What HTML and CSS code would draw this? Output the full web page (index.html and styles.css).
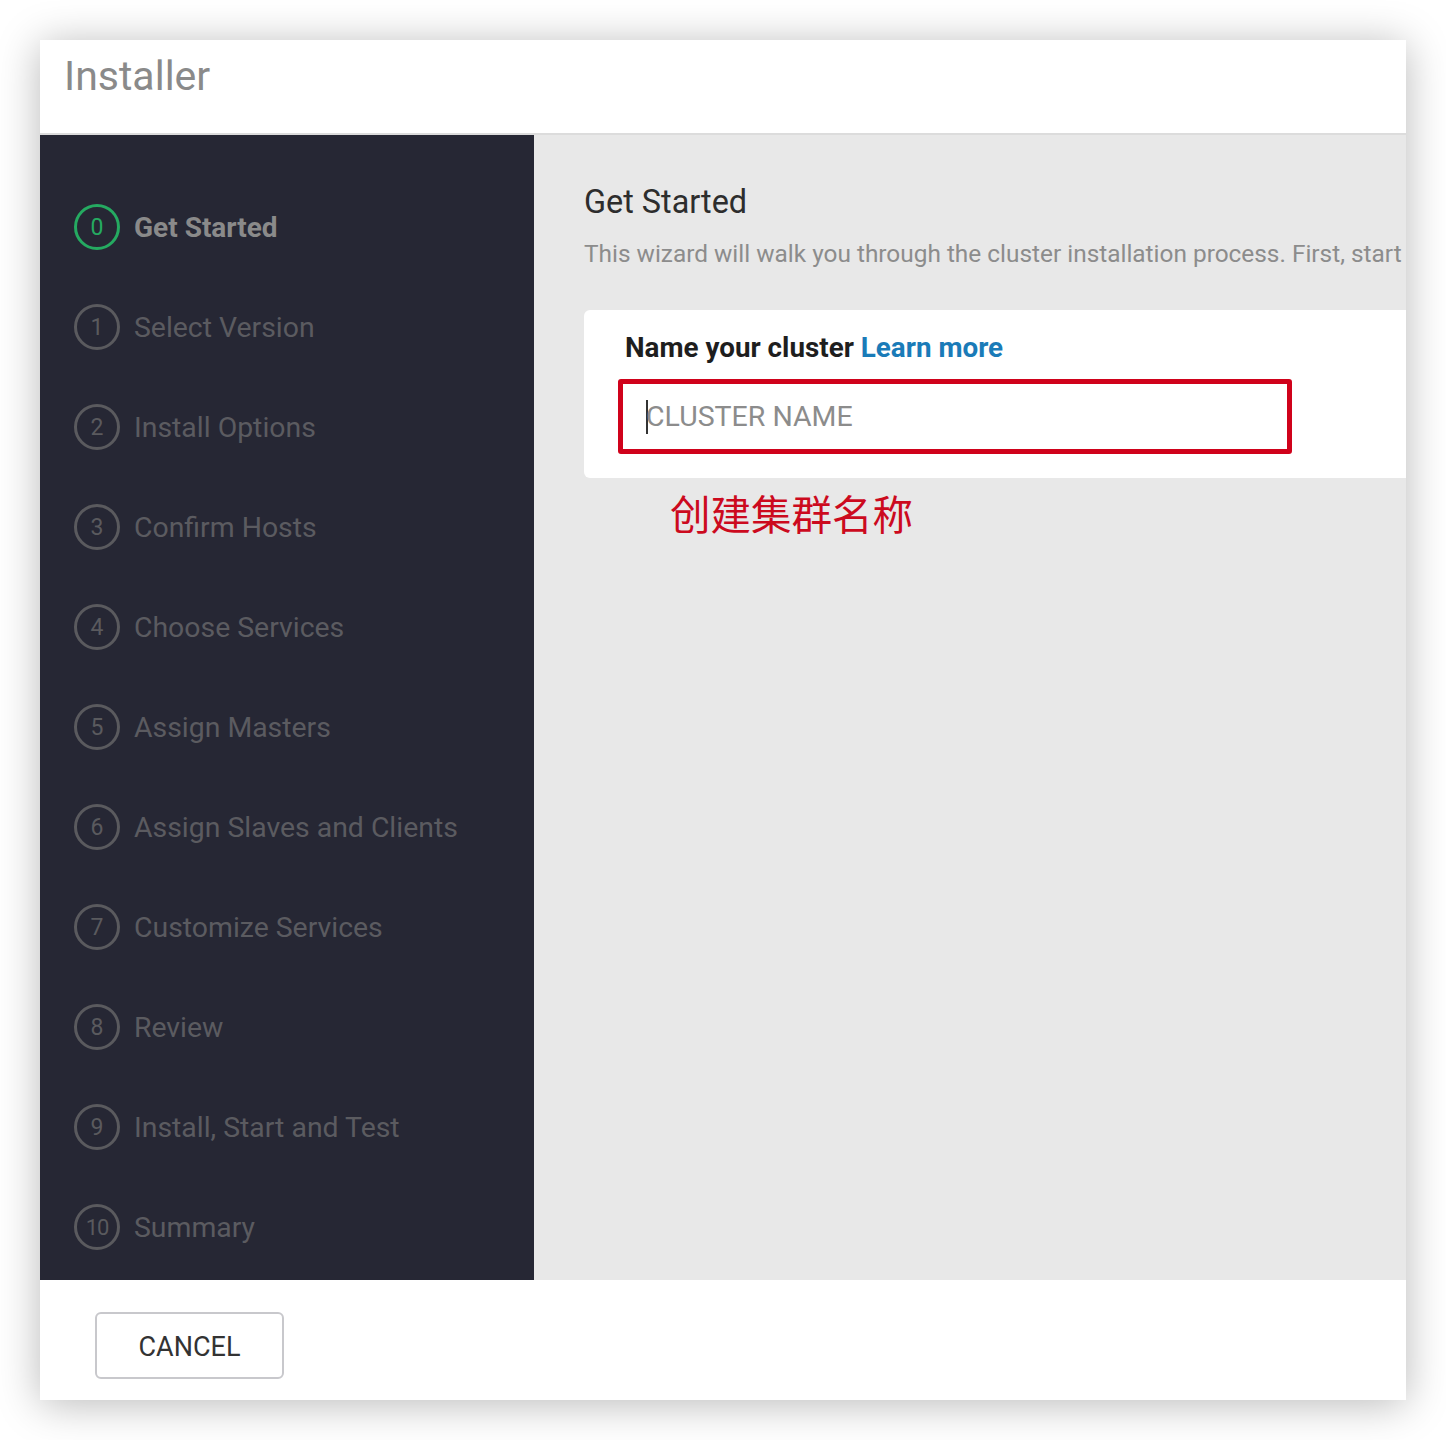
FILE: index.html
```html
<!DOCTYPE html>
<html>
<head>
<meta charset="utf-8">
<link rel="stylesheet" href="styles.css">
</head>
<body>
<div class="window">
  <header class="header">Installer</header>
  <div class="main">
    <nav class="sidebar">
      <div class="step active"><span class="num">0</span><span class="label">Get Started</span></div>
      <div class="step"><span class="num">1</span><span class="label">Select Version</span></div>
      <div class="step"><span class="num">2</span><span class="label">Install Options</span></div>
      <div class="step"><span class="num">3</span><span class="label">Confirm Hosts</span></div>
      <div class="step"><span class="num">4</span><span class="label">Choose Services</span></div>
      <div class="step"><span class="num">5</span><span class="label">Assign Masters</span></div>
      <div class="step"><span class="num">6</span><span class="label">Assign Slaves and Clients</span></div>
      <div class="step"><span class="num">7</span><span class="label">Customize Services</span></div>
      <div class="step"><span class="num">8</span><span class="label">Review</span></div>
      <div class="step"><span class="num">9</span><span class="label">Install, Start and Test</span></div>
      <div class="step"><span class="num num-wide">10</span><span class="label">Summary</span></div>
    </nav>
    <section class="content">
      <h2 class="title">Get Started</h2>
      <p class="desc">This wizard will walk you through the cluster installation process. First, start</p>
      <div class="card">
        <div class="card-label">Name your cluster <a class="link">Learn more</a></div>
        <div class="input"><span class="caret"></span><span class="placeholder">CLUSTER NAME</span></div>
      </div>
      <div class="note">创建集群名称</div>
    </section>
  </div>
  <footer class="footer">
    <button class="cancel">CANCEL</button>
  </footer>
</div>
</body>
</html>
```

FILE: styles.css
```css
html, body {
  margin: 0;
  padding: 0;
  background: #ffffff;
}
body {
  font-family: Roboto, "Liberation Sans", "Noto Sans CJK SC", sans-serif;
  padding: 40px;
  width: 1366px;
}
.window {
  width: 1366px;
  height: 1360px;
  background: #ffffff;
  box-shadow: 0 4px 40px rgba(0, 0, 0, 0.28);
  display: flex;
  flex-direction: column;
  overflow: hidden;
}
.header {
  height: 93px;
  border-bottom: 2px solid #dcdcdc;
  box-sizing: content-box;
  padding-left: 24px;
  font-size: 41px;
  line-height: 72px;
  color: #8a8a8a;
  flex: none;
}
.main {
  display: flex;
  height: 1145px;
  flex: none;
}
.sidebar {
  width: 494px;
  flex: none;
  background: #262734;
  padding-top: 42px;
  box-sizing: border-box;
}
.step {
  height: 100px;
  display: flex;
  align-items: center;
  padding-left: 34px;
}
.num {
  width: 40px;
  height: 40px;
  border: 3px solid #5a5a5e;
  border-radius: 50%;
  display: flex;
  align-items: center;
  justify-content: center;
  font-size: 23px;
  color: #5a5a5e;
  flex: none;
}
.num-wide {
  font-size: 22px;
  letter-spacing: -1px;
}
.label {
  margin-left: 14px;
  font-size: 28.4px;
  color: #5b5b60;
}
.step.active .num {
  border-color: #25aa61;
  color: #25aa61;
}
.step.active .label {
  font-weight: 700;
  font-size: 28px;
  color: #8a8a8a;
}
.content {
  flex: 1;
  background: #e8e8e8;
  padding-left: 50px;
  overflow: hidden;
  min-width: 0;
}
.title {
  margin: 49px 0 0 0;
  font-weight: 400;
  font-size: 32.4px;
  line-height: 36px;
  color: #2d2d2d;
}
.desc {
  margin: 19px 0 0 0;
  font-size: 24.4px;
  line-height: 30px;
  color: #8c8c8c;
  white-space: nowrap;
}
.card {
  margin-top: 41px;
  width: 1000px;
  height: 168px;
  background: #ffffff;
  border-radius: 6px;
  padding: 21px 0 0 34px;
  box-sizing: border-box;
}
.card-label {
  padding-left: 7px;
  font-size: 27.8px;
  font-weight: 700;
  color: #1e1e1e;
  line-height: 34px;
}
.link {
  color: #1a7bb8;
}
.input {
  margin-top: 14px;
  width: 674px;
  height: 75px;
  border: 5px solid #d0021b;
  border-radius: 3px;
  box-sizing: border-box;
  display: flex;
  align-items: center;
  padding-left: 23px;
}
.caret {
  width: 2px;
  height: 34px;
  background: #333;
  flex: none;
}
.placeholder {
  font-size: 28.5px;
  color: #8c8c8c;
  margin-left: -2px;
}
.note {
  margin: 12px 0 0 86px;
  font-family: "Noto Sans CJK SC", sans-serif;
  font-size: 40.5px;
  line-height: 46px;
  color: #cc0a1e;
}
.footer {
  flex: 1;
  background: #ffffff;
  padding: 32px 0 0 55px;
  box-sizing: border-box;
}
.cancel {
  width: 189px;
  height: 67px;
  border: 2px solid #c8c8cc;
  border-radius: 6px;
  background: #ffffff;
  font-family: Roboto, "Liberation Sans", sans-serif;
  font-size: 27px;
  color: #333333;
  padding: 2px 0 0 0;
}
```
